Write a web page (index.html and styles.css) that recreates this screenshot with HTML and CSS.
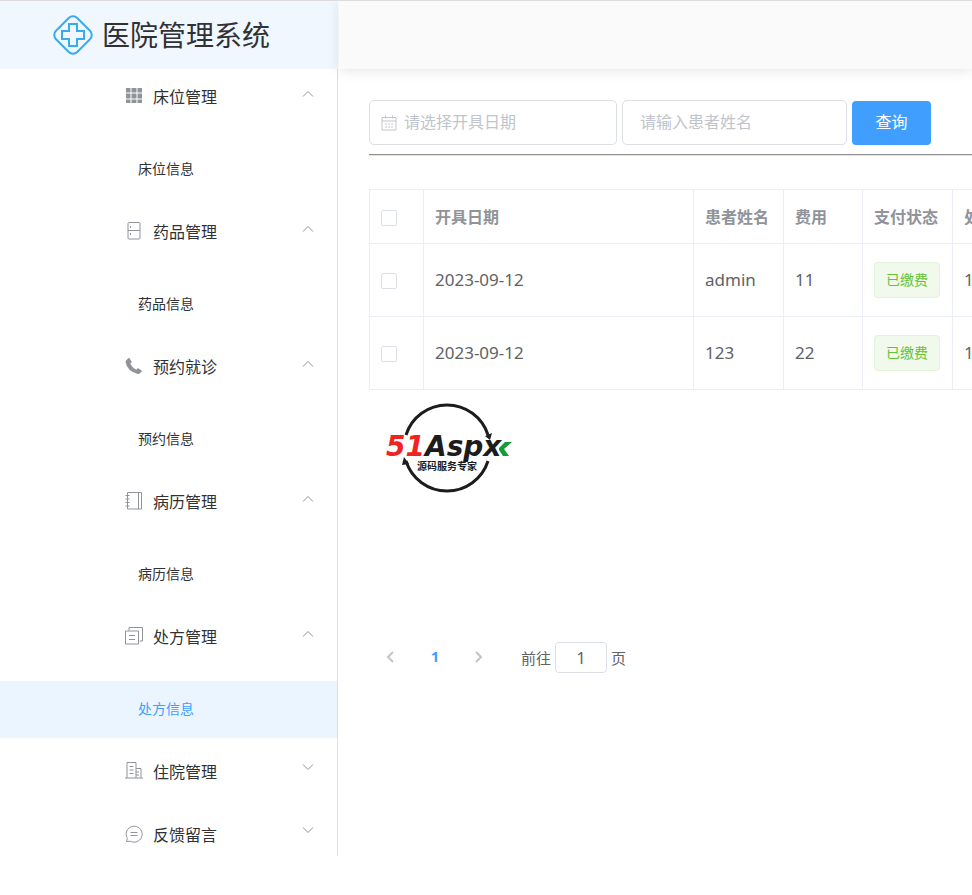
FILE: index.html
```html
<!DOCTYPE html>
<html lang="zh-CN">
<head>
    <meta charset="UTF-8">
    <title>医院管理系统</title>
    <link rel="stylesheet" href="styles.css">
</head>
<body>
<div class="layout">
    <aside class="aside">
        <div class="logo">
            <svg class="logo-icon" viewBox="0 0 42 42">
                <rect x="6" y="6" width="30" height="30" rx="6" transform="rotate(45 21 21)"/>
                <path d="M17 10h8v7h7v8h-7v7h-8v-7h-7v-8h7z"/>
            </svg>
            <span>医院管理系统</span>
        </div>
        <nav class="menu">
            <div class="submenu">
                <button class="menu-title">
                    <svg class="icon" viewBox="0 0 18 18"><path class="fill" d="M1 1h4.500v4.500H1zM6.500 1h5v4.500h-5zM12.500 1H17v4.500h-4.500zM1 6.500h4.500v5H1zM6.500 6.500h5v5h-5zM12.500 6.500H17v5h-4.500zM1 12.500h4.500V16H1zM6.500 12.500h5V16h-5zM12.500 12.500H17V16h-4.500z"/></svg>
                    <span>床位管理</span>
                    <svg class="arrow" viewBox="0 0 12 12"><path d="M1 8.500l5-5 5 5"/></svg>
                </button>
                <a class="menu-item" href="#">床位信息</a>
            </div>
            <div class="submenu">
                <button class="menu-title">
                    <svg class="icon" viewBox="0 0 18 18"><path d="M4 .5h10q1 0 1 1v14.500q0 1-1 1H4q-1 0-1-1V1.500q0-1 1-1zM3 8.500h12M5.500 4v2M5.500 11v2"/></svg>
                    <span>药品管理</span>
                    <svg class="arrow" viewBox="0 0 12 12"><path d="M1 8.500l5-5 5 5"/></svg>
                </button>
                <a class="menu-item" href="#">药品信息</a>
            </div>
            <div class="submenu">
                <button class="menu-title">
                    <svg class="icon" viewBox="0 0 18 18"><path class="fill" d="M1 3.500L3.500 1q.5-.3 1 .2l2 3q.5.800-.2 1.300l-1 .8q1.500 4 6 6.500l1-1.200q.6-.6 1.300-.2l3 2q.7.500.1 1.200l-2 2q-.7.500-2 .3Q2 14 .7 5.500.500 4.200 1 3.500z"/></svg>
                    <span>预约就诊</span>
                    <svg class="arrow" viewBox="0 0 12 12"><path d="M1 8.500l5-5 5 5"/></svg>
                </button>
                <a class="menu-item" href="#">预约信息</a>
            </div>
            <div class="submenu">
                <button class="menu-title">
                    <svg class="icon" viewBox="0 0 18 18"><path d="M2.500.5h14v16.500h-14zM13.500.5v16.500M.5 3.500h4M.5 7h4M.5 10.500h4M.5 14h4"/></svg>
                    <span>病历管理</span>
                    <svg class="arrow" viewBox="0 0 12 12"><path d="M1 8.500l5-5 5 5"/></svg>
                </button>
                <a class="menu-item" href="#">病历信息</a>
            </div>
            <div class="submenu">
                <button class="menu-title">
                    <svg class="icon" viewBox="0 0 18 18"><path d="M.5 4h13v13H.5zM4 3.500V.5h13.500V14h-3M4 8.500h6M4 12.500h6"/></svg>
                    <span>处方管理</span>
                    <svg class="arrow" viewBox="0 0 12 12"><path d="M1 8.500l5-5 5 5"/></svg>
                </button>
                <a class="menu-item active" href="#">处方信息</a>
            </div>
            <div class="submenu">
                <button class="menu-title">
                    <svg class="icon" viewBox="0 0 18 18"><path d="M2 16V.5h9V16M11 6.500h5V16M0 16h18M4.500 4.500h4M4.500 8h4M4.500 11.500h4M11 10h3M11 13h3"/></svg>
                    <span>住院管理</span>
                    <svg class="arrow down" viewBox="0 0 12 12"><path d="M1 3.500l5 5 5-5"/></svg>
                </button>
            </div>
            <div class="submenu">
                <button class="menu-title">
                    <svg class="icon" viewBox="0 0 18 18"><path d="M1.500 16.500l.8-3.200A8 8 0 1 1 5.500 16.300zM5.500 7.500h7M5.500 10.500h7"/></svg>
                    <span>反馈留言</span>
                    <svg class="arrow down" viewBox="0 0 12 12"><path d="M1 3.500l5 5 5-5"/></svg>
                </button>
            </div>
        </nav>
    </aside>
    <div class="container">
        <header class="header"></header>
        <main class="main">
            <form class="search">
                <label class="date-box">
                    <svg class="date-icon" viewBox="0 0 16 16"><path d="M1 2.500h14v12.500H1zM1 6h14M4.500.5v3M11.500.5v3M4 9h2M7 9h2M10 9h2M4 12h2M7 12h2M10 12h2"/></svg>
                    <input type="text" class="date-input" placeholder="请选择开具日期" aria-label="开具日期">
                </label>
                <input type="text" class="name-input" placeholder="请输入患者姓名" aria-label="患者姓名">
                <button type="button" class="btn-search">查询</button>
            </form>
            <hr class="line">
            <table class="table">
                <colgroup>
                    <col class="col-check">
                    <col class="col-date">
                    <col class="col-name">
                    <col class="col-fee">
                    <col class="col-state">
                    <col>
                </colgroup>
                <thead>
                <tr>
                    <th><input type="checkbox" aria-label="全选"></th>
                    <th>开具日期</th>
                    <th>患者姓名</th>
                    <th>费用</th>
                    <th>支付状态</th>
                    <th>处</th>
                </tr>
                </thead>
                <tbody>
                <tr>
                    <td><input type="checkbox" aria-label="选择"></td>
                    <td>2023-09-12</td>
                    <td>admin</td>
                    <td>11</td>
                    <td><span class="tag">已缴费</span></td>
                    <td>1</td>
                </tr>
                <tr>
                    <td><input type="checkbox" aria-label="选择"></td>
                    <td>2023-09-12</td>
                    <td>123</td>
                    <td>22</td>
                    <td><span class="tag">已缴费</span></td>
                    <td>1</td>
                </tr>
                </tbody>
            </table>
            <svg class="brand" viewBox="0 0 128 92">
                <g class="ring">
                    <path d="M20 33A43 43 0 0 1 102 33"/>
                    <path d="M20 59A43 43 0 0 0 102 59"/>
                </g>
                <path d="M99 34l7-3-2 7zM16 63l2-8 5 7z"/>
                <text class="brand-name" x="0" y="54"><tspan class="red">51</tspan>Aspx</text>
                <path class="green" d="M113 46l6-6h7l-8 7 5 7h-6l-4-6z"/>
                <text class="brand-sub" x="61" y="68">源码服务专家</text>
            </svg>
            <div class="pagination">
                <button class="page-btn" aria-label="上一页"><svg viewBox="0 0 12 12"><path d="M8 1L3 6l5 5"/></svg></button>
                <button class="page-num">1</button>
                <button class="page-btn" aria-label="下一页"><svg viewBox="0 0 12 12"><path d="M3 1l5 5-5 5"/></svg></button>
                <label class="jump">前往<input type="text" value="1">页</label>
            </div>
        </main>
    </div>
</div>
</body>
</html>
```
FILE: styles.css
```css
*{
    box-sizing: border-box;
}
body{
    margin: 0;
    border-top: 1px solid #dcdcdc;
    background-color: white;
    color: #303133;
    font-family: "Noto Sans","Noto Sans CJK SC",sans-serif;
    font-size: 16px;
    overflow-x: hidden;
}
button,input{
    font-family: inherit;
}
svg{
    fill: none;
    stroke: #909399;
}
.layout{
    display: flex;
    align-items: flex-start;
}

/*左侧菜单*/
.aside{
    flex: none;
    width: 338px;
}
.logo{
    display: flex;
    align-items: center;
    justify-content: center;
    gap: 8px;
    height: 68px;
    padding-right: 16px;
    background-color: #f0f7ff;
    font-size: 28px;
    line-height: 68px;
}
.logo-icon{
    width: 42px;
    height: 42px;
    stroke: #38acea;
    stroke-width: 2;
}
.menu{
    height: 787px;
    border-right: 1px solid #dcdfe6;
    overflow: hidden;
}
.submenu:first-child{
    margin-top: -6px;
}
.menu-title{
    display: flex;
    align-items: center;
    width: 100%;
    height: 63px;
    padding: 2px 23px 0 125px;
    border: none;
    background: none;
    color: #303133;
    font-size: 16px;
    cursor: pointer;
}
.icon{
    width: 18px;
    height: 18px;
    margin-right: 10px;
}
.icon .fill{
    fill: #909399;
    stroke: none;
}
.arrow{
    width: 12px;
    height: 12px;
    margin: 0 0 4px auto;
}
.arrow.down{
    margin-bottom: 8px;
}
.menu-item{
    display: block;
    height: 57px;
    margin-top: 15px;
    padding-left: 138px;
    color: #303133;
    font-size: 14px;
    line-height: 56px;
    text-decoration: none;
}
.menu-item.active{
    background-color: #ebf5ff;
    color: #409eff;
}

/*右侧内容*/
.container{
    flex: 1;
    min-width: 0;
}
.header{
    height: 68px;
    margin-left: 1px;
    background-color: #fafafa;
    box-shadow: 0 2px 12px rgba(0,0,0,0.1);
}
.main{
    padding: 31px 0 30px 31px;
    overflow: hidden;
}
.search{
    display: flex;
    gap: 5px;
    align-items: center;
}
.date-box,.name-input{
    height: 45px;
    border: 1px solid #dcdfe6;
    border-radius: 5px;
    background-color: white;
    font-size: 16px;
}
.date-box{
    display: flex;
    align-items: center;
    gap: 7px;
    width: 248px;
    padding-left: 11px;
}
.date-icon{
    flex: none;
    width: 16px;
    height: 16px;
    stroke: #c0c4cc;
}
.date-input{
    width: 100%;
    padding: 0 0 2px;
    border: none;
    outline: none;
    background: none;
    font-size: 16px;
}
.name-input{
    width: 225px;
    padding: 0 17px 2px;
}
input::placeholder{
    color: #c0c4cc;
}
.btn-search{
    width: 79px;
    height: 44px;
    padding-bottom: 4px;
    border: none;
    border-radius: 4px;
    background-color: #409eff;
    color: white;
    font-size: 16px;
    cursor: pointer;
}
.line{
    margin: 9px 0 33px;
    border: none;
    border-top: 1px solid #909090;
    border-bottom: 1px solid #e4e4e4;
}
.table{
    width: 680px;
    table-layout: fixed;
    border-spacing: 0;
    border-top: 1px solid #ebeef5;
    border-left: 1px solid #ebeef5;
    color: #606266;
    font-size: 17px;
}
.col-check{
    width: 54px;
}
.col-date{
    width: 270px;
}
.col-name,.col-state{
    width: 90px;
}
.col-fee{
    width: 79px;
}
th,td{
    height: 73px;
    padding: 0 0 2px 11px;
    border-right: 1px solid #ebeef5;
    border-bottom: 1px solid #ebeef5;
    text-align: left;
    white-space: nowrap;
}
th{
    height: 54px;
    color: #909399;
    font-size: 16px;
}
input[type="checkbox"]{
    display: block;
    appearance: none;
    width: 16px;
    height: 16px;
    margin: 4px 0 0;
    border: 1px solid #dcdfe6;
    border-radius: 2px;
    background-color: white;
}
.tag{
    display: inline-block;
    height: 36px;
    margin-top: 2px;
    padding: 0 11px;
    border: 1px solid #e1f3d8;
    border-radius: 4px;
    background-color: #f0f9eb;
    color: #67c23a;
    font-size: 14px;
    line-height: 33px;
    vertical-align: middle;
}
.brand{
    display: block;
    width: 128px;
    height: 92px;
    margin: 12px 0 0 17px;
    fill: #1c1c1c;
    stroke: none;
}
.ring{
    fill: none;
    stroke: #1c1c1c;
    stroke-width: 3;
}
.brand-name{
    font: italic bold 28px "DejaVu Sans",sans-serif;
}
.brand-sub{
    font-size: 10px;
    font-weight: bold;
    text-anchor: middle;
}
.red{
    fill: #f22222;
}
.green{
    fill: #169b36;
}

/*分页*/
.pagination{
    display: flex;
    align-items: center;
    margin-top: 148px;
    color: #606266;
    font-size: 15px;
}
.page-btn,.page-num{
    width: 44px;
    height: 31px;
    padding: 0 0 3px;
    border: none;
    background: none;
    cursor: pointer;
}
.page-btn svg{
    width: 12px;
    height: 12px;
    stroke: #c0c4cc;
    stroke-width: 2;
    vertical-align: middle;
}
.page-num{
    color: #409eff;
    font-size: 15px;
    font-weight: bold;
}
.jump{
    display: flex;
    align-items: center;
    gap: 4px;
    margin-left: 20px;
}
.jump input{
    width: 52px;
    height: 31px;
    border: 1px solid #dcdfe6;
    border-radius: 4px;
    color: #606266;
    font-size: 16px;
    text-align: center;
}
```
